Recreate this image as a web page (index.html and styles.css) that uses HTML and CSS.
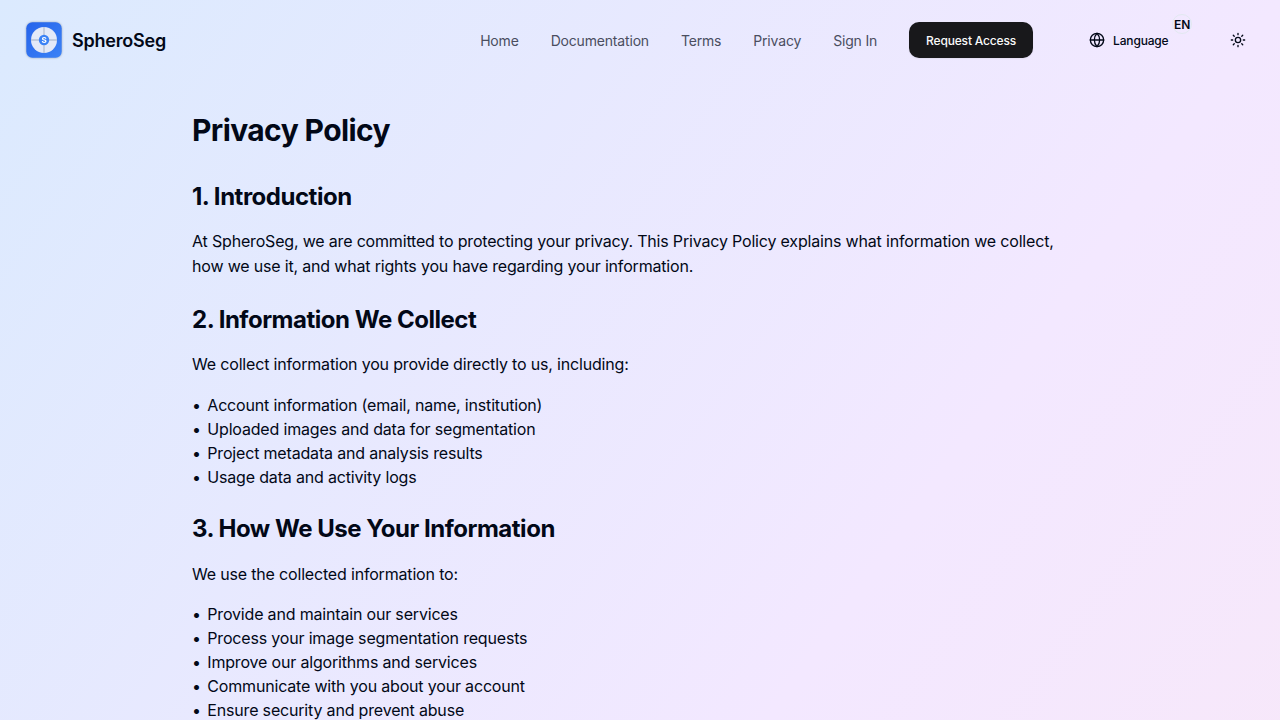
FILE: index.html
```html
<!DOCTYPE html>
<html lang="en">
<head>
<meta charset="utf-8">
<title>SpheroSeg – Privacy Policy</title>
<link rel="stylesheet" href="styles.css">
</head>
<body>
<div class="page">
  <header class="header">
    <a class="brand">
      <svg class="logo" viewBox="0 0 40 40">
        <defs>
          <linearGradient id="tile" x1="0" y1="0" x2="1" y2="1">
            <stop offset="0" stop-color="#2563eb"/>
            <stop offset="1" stop-color="#3b82f6"/>
          </linearGradient>
        </defs>
        <rect x="2.3" y="2.3" width="35.4" height="35.4" rx="6" fill="url(#tile)"/>
        <circle cx="20" cy="20" r="13" fill="#e3e9f8"/>
        <path d="M20 7v26M7 20h26" stroke="#94a3b8" stroke-width="1.8" opacity=".42"/>
        <circle cx="20" cy="20" r="5.2" fill="#3b82f6"/>
        <text class="logo-letter" x="20" y="23" text-anchor="middle">S</text>
      </svg>
      <span class="brand-name">SpheroSeg</span>
    </a>
    <nav class="nav">
      <a>Home</a>
      <a>Documentation</a>
      <a>Terms</a>
      <a>Privacy</a>
      <a>Sign In</a>
      <button class="cta">Request Access</button>
      <div class="tools">
        <button class="language">
          <svg class="icon" viewBox="0 0 24 24"><circle cx="12" cy="12" r="10"/><path d="M12 2a14.5 14.5 0 0 0 0 20 14.5 14.5 0 0 0 0-20"/><path d="M2 12h20"/></svg>
          <span class="language-label">Language</span>
          <span class="badge">EN</span>
        </button>
        <button class="theme" aria-label="Theme">
          <svg class="icon" viewBox="0 0 24 24"><circle cx="12" cy="12" r="4"/><path d="M12 2v2M12 20v2M4.93 4.93l1.41 1.41M17.66 17.66l1.41 1.41M2 12h2M20 12h2M6.34 17.66l-1.41 1.41M19.07 4.93l-1.41 1.41"/></svg>
        </button>
      </div>
    </nav>
  </header>
  <main class="content">
    <h1>Privacy Policy</h1>
    <h2>1. Introduction</h2>
    <p>At SpheroSeg, we are committed to protecting your privacy. This Privacy Policy explains what information we collect, how we use it, and what rights you have regarding your information.</p>
    <h2>2. Information We Collect</h2>
    <p>We collect information you provide directly to us, including:</p>
    <ul>
      <li>Account information (email, name, institution)</li>
      <li>Uploaded images and data for segmentation</li>
      <li>Project metadata and analysis results</li>
      <li>Usage data and activity logs</li>
    </ul>
    <h2>3. How We Use Your Information</h2>
    <p>We use the collected information to:</p>
    <ul>
      <li>Provide and maintain our services</li>
      <li>Process your image segmentation requests</li>
      <li>Improve our algorithms and services</li>
      <li>Communicate with you about your account</li>
      <li>Ensure security and prevent abuse</li>
    </ul>
  </main>
</div>
</body>
</html>
```
FILE: styles.css
```css
* { box-sizing: border-box; }
html { height: 100%; }
body {
  margin: 0;
  height: 100%;
  font-family: Inter, "Liberation Sans", sans-serif;
  font-size: 16px;
  line-height: 24px;
  letter-spacing: -0.178px;
  color: #020817;
  -webkit-font-smoothing: antialiased;
}
.page {
  height: 100vh;
  overflow: hidden;
  background: linear-gradient(to bottom right, #dbeafe, #f3e8ff 50%, #fce7f3) 0 0 / 100% 1800px no-repeat;
}
.header {
  display: flex;
  justify-content: space-between;
  align-items: center;
  height: 80px;
  padding: 0 24px;
}
.brand { display: flex; align-items: center; gap: 8px; }
.logo { width: 40px; height: 40px; filter: drop-shadow(0 0 1px rgba(0, 0, 0, .3)); }
.logo-letter { font-size: 8px; font-weight: 700; fill: #fff; letter-spacing: 0; }
.brand-name { font-size: 18px; font-weight: 600; line-height: 28px; letter-spacing: -0.2px; padding-top: 2px; }
.nav { display: flex; align-items: center; gap: 32px; font-size: 14px; line-height: 20px; letter-spacing: -0.18px; color: #4a4e5f; }
.nav a { padding-top: 2px; }
button {
  border: 0;
  background: none;
  padding: 0;
  font: 500 12px/16px Inter, sans-serif;
  letter-spacing: -0.17px;
  color: #020817;
}
.cta { height: 36px; width: 124px; border-radius: 10px; background: #18181b; color: #fafafa; padding-top: 2px; box-shadow: 0 1px 2px rgba(0, 0, 0, .06); }
.tools { display: flex; align-items: center; padding-left: 24px; gap: 51.5px; }
.language { position: relative; display: flex; align-items: center; gap: 8px; height: 36px; }
.language-label { padding-top: 2px; }
.icon { width: 16px; height: 16px; fill: none; stroke: #020817; stroke-width: 2; stroke-linecap: round; stroke-linejoin: round; }
.badge { position: absolute; left: 83px; top: -8px; width: 20px; height: 20px; padding-top: 2px; border: 1px solid #e2e8f0; border-radius: 50%; display: flex; align-items: center; justify-content: center; font-weight: 600; }
.theme { display: flex; align-items: center; justify-content: center; width: 36px; height: 36px; }
.content { width: 896px; margin: 0 auto; padding-top: 32px; }
h1 { margin: 0 0 32.5px; font-size: 30px; line-height: 36px; font-weight: 700; letter-spacing: -0.6px; }
h2 { margin: 0 0 16px; font-size: 24px; line-height: 32px; font-weight: 700; letter-spacing: -0.48px; }
p { margin: 0 0 16px; line-height: 25.6px; }
p + h2, ul + h2 { margin-top: 24px; }
ul + h2 { margin-bottom: 16.6px; }
ul + h2 + p { margin-bottom: 14.6px; }
ul { margin: 0; padding: 0; list-style: none; }
li::before { content: "•"; display: inline-block; width: 15.3px; }
```
